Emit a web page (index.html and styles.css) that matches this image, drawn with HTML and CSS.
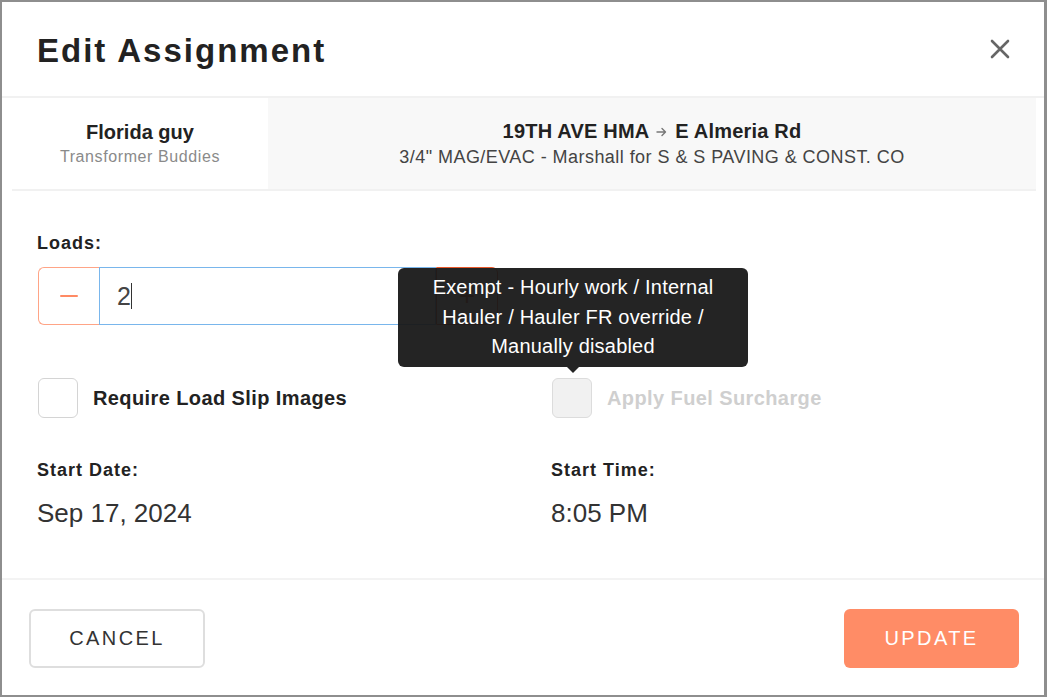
FILE: index.html
```html
<!DOCTYPE html>
<html>
<head>
<meta charset="utf-8">
<link rel="stylesheet" href="styles.css">
</head>
<body>
<div class="frame">
  <div class="header">
    <h1 class="title">Edit Assignment</h1>
    <button class="close" aria-label="Close">
      <svg width="20" height="20" viewBox="0 0 20 20"><path d="M2 2 L18 18 M18 2 L2 18" stroke="#666" stroke-width="2.6" stroke-linecap="round"/></svg>
    </button>
  </div>
  <div class="info">
    <div class="info-left">
      <div class="info-name">Florida guy</div>
      <div class="info-sub">Transformer Buddies</div>
    </div>
    <div class="info-right">
      <div class="info-route">19TH AVE HMA <svg class="arrow" width="11" height="10" viewBox="0 0 11 10"><path d="M1 5 H9.5 M6 1.5 L9.5 5 L6 8.5" fill="none" stroke="#777" stroke-width="1.4" stroke-linecap="round" stroke-linejoin="round"/></svg> E Almeria Rd</div>
      <div class="info-desc">3/4" MAG/EVAC - Marshall for S &amp; S PAVING &amp; CONST. CO</div>
    </div>
  </div>
  <div class="body">
    <div class="label">Loads:</div>
    <div class="stepper-wrap">
      <div class="stepper">
        <button class="step minus"><span class="minus-bar"></span></button>
        <div class="step-input">2<span class="caret"></span></div>
        <button class="step plus">+</button>
      </div>
      <div class="tooltip">Exempt - Hourly work / Internal<br>Hauler / Hauler FR override /<br>Manually disabled</div>
    </div>
    <div class="grid">
      <label class="check">
        <span class="box"></span>
        <span class="check-label">Require Load Slip Images</span>
      </label>
      <label class="check disabled">
        <span class="box"></span>
        <span class="check-label">Apply Fuel Surcharge</span>
      </label>
      <div class="field">
        <div class="label">Start Date:</div>
        <div class="value">Sep 17, 2024</div>
      </div>
      <div class="field">
        <div class="label">Start Time:</div>
        <div class="value">8:05 PM</div>
      </div>
    </div>
  </div>
  <div class="footer">
    <button class="btn cancel">CANCEL</button>
    <button class="btn update">UPDATE</button>
  </div>
</div>
</body>
</html>
```

FILE: styles.css
```css
* { box-sizing: border-box; }
html, body { margin: 0; padding: 0; background: #fff; }
body { font-family: "Liberation Sans", Arial, sans-serif; color: #222; }

.frame {
  width: 1047px;
  height: 697px;
  border: 2px solid #8e8e8e;
  border-right-width: 3px;
  background: #fff;
  display: flex;
  flex-direction: column;
}

.header {
  height: 96px;
  display: flex;
  align-items: center;
  justify-content: space-between;
  padding: 0 34px 0 35px;
  border-bottom: 2px solid #f1f1f1;
}
.title {
  margin: 0;
  font-size: 33px;
  font-weight: 700;
  letter-spacing: 2px;
  color: #222;
  padding-top: 3px;
}
.close {
  border: 0;
  background: none;
  padding: 0;
  width: 20px;
  height: 20px;
  margin-top: 0;
}

.info {
  margin: 0 8px 0 10px;
  height: 93px;
  display: flex;
  border-bottom: 2px solid #f1f1f1;
}
.info-left {
  width: 256px;
  background: #fff;
  display: flex;
  flex-direction: column;
  align-items: center;
  justify-content: center;
}
.info-right {
  flex: 1;
  background: #f8f8f8;
  display: flex;
  flex-direction: column;
  align-items: center;
  justify-content: center;
}
.info-name, .info-route {
  font-size: 20px;
  font-weight: 700;
  color: #222;
  line-height: 24px;
}
.info-route { letter-spacing: 0.2px; }
.info-sub {
  font-size: 16px;
  letter-spacing: 0.6px;
  color: #8a8a8a;
  margin-top: 3px;
  line-height: 20px;
}
.info-desc {
  font-size: 18px;
  letter-spacing: 0.45px;
  color: #444;
  margin-top: 3px;
  line-height: 22px;
}
.arrow { display: inline-block; vertical-align: middle; margin: -2px 2px 0 2px; }

.body {
  flex: 1;
  padding: 41px 35px 0 35px;
  border-bottom: 2px solid #f3f3f3;
}
.label {
  font-size: 18px;
  letter-spacing: 1px;
  font-weight: 700;
  color: #222;
  line-height: 22px;
}
.stepper-wrap {
  position: relative;
  margin-top: 13px;
  height: 58px;
}
.stepper {
  display: flex;
  width: 460px;
  height: 58px;
  margin-left: 1px;
}
.step {
  width: 62px;
  height: 58px;
  background: #fff;
  border: 1.5px solid #ffa486;
  padding: 0;
  display: flex;
  align-items: center;
  justify-content: center;
  font-family: inherit;
}
.minus { border-radius: 6px 0 0 6px; border-right: 0; width: 61px; }
.minus-bar { width: 18px; height: 2px; background: #ff8a64; border-radius: 1px; }
.plus {
  border-radius: 0 6px 6px 0;
  border-color: #e8572a;
  color: #c4461f;
  font-size: 28px;
  font-weight: 300;
}
.step-input {
  width: 337px;
  height: 58px;
  border: 1.5px solid #79b6ec;
  padding-left: 17px;
  font-size: 25px;
  color: #444;
  display: flex;
  align-items: center;
}
.caret { display: inline-block; width: 1.5px; height: 26px; background: #333; margin-left: 0; }

.tooltip {
  position: absolute;
  left: 361px;
  top: 1px;
  width: 350px;
  height: 99px;
  background: rgba(24, 24, 24, 0.95);
  color: #fff;
  border-radius: 6px;
  font-size: 20px;
  letter-spacing: 0.2px;
  line-height: 29.5px;
  text-align: center;
  padding-top: 5px;
  z-index: 2;
}
.tooltip::after {
  content: "";
  position: absolute;
  left: 169px;
  bottom: -6px;
  border-left: 6px solid transparent;
  border-right: 6px solid transparent;
  border-top: 6px solid rgba(24, 24, 24, 0.95);
}

.grid {
  display: grid;
  grid-template-columns: 514px 1fr;
  margin-top: 53px;
  row-gap: 41px;
}
.check {
  display: flex;
  align-items: center;
  padding-left: 1px;
}
.box {
  width: 40px;
  height: 40px;
  border: 1.5px solid #d4d4d4;
  border-radius: 6px;
  background: #fff;
}
.check-label {
  margin-left: 15px;
  font-size: 20px;
  letter-spacing: 0.4px;
  font-weight: 700;
  color: #222;
}
.disabled .box { background: #f1f1f1; border-color: #dcdcdc; }
.disabled .check-label { color: #cfcfcf; }

.field .value {
  margin-top: 17px;
  font-size: 26px;
  color: #333;
  line-height: 30px;
}

.footer {
  height: 115px;
  display: flex;
  align-items: center;
  justify-content: space-between;
  padding: 0 24px 0 27px;
}
.btn {
  width: 176px;
  height: 59px;
  border-radius: 6px;
  font-family: inherit;
  font-size: 20px;
  letter-spacing: 2.4px;
  margin-top: 1px;
}
.cancel {
  background: #fff;
  border: 2px solid #dedede;
  color: #333;
}
.update {
  background: #ff8c66;
  border: 0;
  color: #fff;
  font-weight: 400;
  width: 175px;
  margin-right: 1px;
}
```
